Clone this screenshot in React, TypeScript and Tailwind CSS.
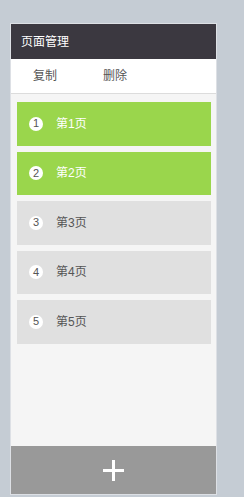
const pages = [
  { n: 1, title: '第1页', active: true },
  { n: 2, title: '第2页', active: true },
  { n: 3, title: '第3页', active: false },
  { n: 4, title: '第4页', active: false },
  { n: 5, title: '第5页', active: false },
];

export default function App() {
  return (
    <div
      className="w-[244px] h-[497px] bg-[#c5ccd4] pt-[23px] pl-[10px]"
      style={{ fontFamily: '"Liberation Sans", "Noto Sans CJK SC", sans-serif' }}
    >
      <div className="w-[207px] h-[472px] border border-[#dde0e5] bg-[#f5f5f5] flex flex-col">
        <div className="h-[35px] bg-[#3b3840] text-white text-[12px] flex items-center pl-[10px]">
          页面管理
        </div>
        <div className="h-[35px] bg-white border-b border-[#dcdcdc] flex items-center text-[12px] text-[#555]">
          <span className="ml-[22px]">复制</span>
          <span className="ml-[46px]">删除</span>
        </div>
        <div className="flex-1 flex flex-col gap-[6px] pt-[8px] pl-[6px] pr-[5px]">
          {pages.map((p) => (
            <div
              key={p.n}
              className={`h-[43.5px] flex items-center text-[12px] ${
                p.active ? 'bg-[#9ad64c] text-white' : 'bg-[#e0e0e0] text-[#555]'
              }`}
            >
              <span className="ml-[12px] w-[14px] h-[14px] rounded-full bg-white text-[#555] text-[11px] flex items-center justify-center leading-none">
                {p.n}
              </span>
              <span className="ml-[13px]">{p.title}</span>
            </div>
          ))}
        </div>
        <div className="h-[48px] bg-[#999999] flex items-center justify-center">
          <svg width="21" height="21" viewBox="0 0 21 21">
            <rect x="0" y="9" width="21" height="3" fill="white" />
            <rect x="9" y="0" width="3" height="21" fill="white" />
          </svg>
        </div>
      </div>
    </div>
  );
}
